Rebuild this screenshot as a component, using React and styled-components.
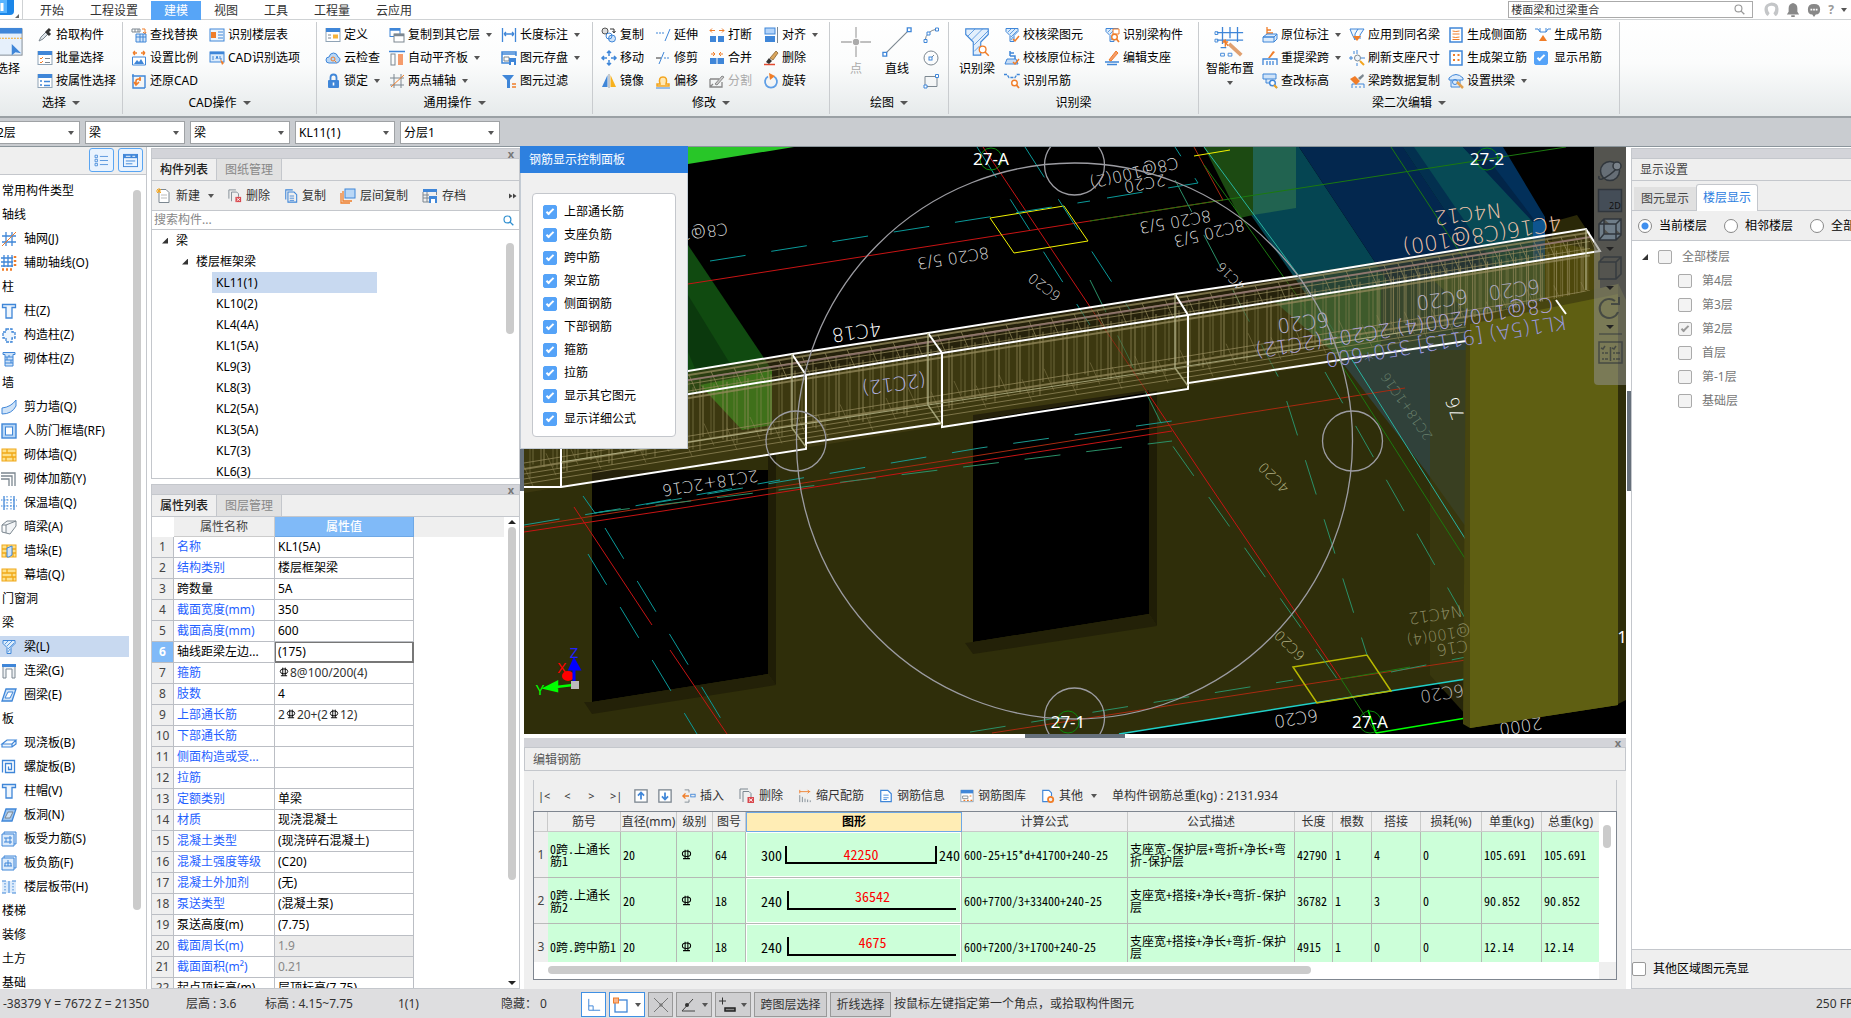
import React from "react";
import styled, { createGlobalStyle, css } from "styled-components";

const BLUE = "#3f86d8";
const ORANGE = "#f07d28";
const GRAY = "#7c8790";
const LINE = "#c4c7cc";
const UI = '"Noto Sans", "Noto Sans CJK SC", sans-serif';
const FIXED = '"Noto Sans Mono CJK SC", "Liberation Serif", "Noto Sans CJK SC", serif';

const Global = createGlobalStyle`
  *, *::before, *::after { box-sizing: border-box; }
  body { margin: 0; font: 12px/16px ${UI}; color: #000; overflow: hidden; }
  button, input, select { font: inherit; color: inherit; margin: 0; }
  button { background: none; border: 0; padding: 0; white-space: nowrap; cursor: default; }
`;

/* ---------- icons ---------- */
const page = <path d="M3 1.5h7l3 3v10H3z" fill="#fff" stroke={GRAY} />;
const hatchT = <><path d="M2 1.5h12v3l-4 4v6H6v-6l-4-4z" fill="#dcecfb" stroke={BLUE} /><path d="M4 5l3-3M6 7l5-5M7 10l6-6M7 13l2-3" stroke={BLUE} strokeWidth=".8" /></>;
const lens = (c = ORANGE) => <><circle cx="10.5" cy="10" r="2.8" fill="#fff" stroke={c} strokeWidth="1.4" /><path d="M12.5 12l2.5 3" stroke={c} strokeWidth="1.8" /></>;
const panelTop = <><rect x="1" y="1.5" width="14" height="13" fill="#fff" stroke="#8fa3b5" /><path d="M1 3h14" stroke={BLUE} strokeWidth="4" /></>;
const redX = <><rect x="8.5" y="9" width="6.5" height="6" fill="#d9484e" /><path d="M10 10.5l3.5 3M13.5 10.5l-3.5 3" stroke="#fff" /></>;
const bricks = <><rect x="1" y="2" width="14" height="12" fill="#fde08a" stroke="#f0a818" /><path d="M1 6h14M1 10h14M6 2v4M11 6v4M5 10v4M12 10v4" stroke="#f0a818" strokeWidth="1.3" /></>;
const icons = {
  dropper: <><path d="M2 14l2-4 5-5 2 2-5 5z" fill="#dfe5ea" stroke={GRAY} /><path d="M9 4l4 4M10 5l3-3" stroke="#333" strokeWidth="3" /></>,
  batch: <>{panelTop}<path d="M3 8l1 1 2-2M3 12l1 1 2-2" stroke={ORANGE} /><path d="M8 8.5h5M8 12.5h5" stroke={GRAY} /></>,
  attr: <>{panelTop}<path d="M3 8h2M3 12h2M7 8.5h6M7 12.5h6" stroke={BLUE} strokeWidth="1.5" /></>,
  replace: <><path d="M1 2h8v3H1zM4 2v3M7 2v3" stroke={GRAY} /><path d="M11 2h3v4M12 5l2 2 1-2" stroke={ORANGE} /><path d="M5 7h10v8H5z" fill="#d5e6f8" stroke={BLUE} /><path d="M5 10h10M9 7v8M12 7v8" stroke={BLUE} /></>,
  ratio: <><path d="M2 3h4M2 3l2-2M2 3l2 2M10 3h4M14 3l-2-2M14 3l-2 2" stroke={ORANGE} strokeWidth="1.3" /><path d="M1.500 7h13v8h-13z" fill="#fff" stroke={BLUE} /><path d="M3 14l3-4 2 2 2-3 3 5z" fill={BLUE} /></>,
  restore: <><path d="M2 1v14h12M1 3h13v12" stroke={BLUE} strokeWidth="1.4" /><path d="M5 11V8q0-2 3-2h2M3 9l2 3 3-3M9 4v4" stroke={ORANGE} strokeWidth="1.6" /></>,
  floorTab: <><rect x="1" y="2" width="14" height="12" fill="#eef5fc" stroke={BLUE} /><rect x="2" y="5" width="5" height="6" fill={ORANGE} /><path d="M9 5h5M9 8h5M9 11h5" stroke={BLUE} /></>,
  cadOpt: <><rect x="1" y="2" width="14" height="10" fill="#dcebfb" stroke={BLUE} /><path d="M1 3h14" stroke={BLUE} strokeWidth="2.5" /><path d="M3 7h2M3 9h2M7 9l1-3 1 3M11 6v3h2" stroke={BLUE} /><path d="M11 9l4 4-2 2z" fill={ORANGE} /></>,
  define: <>{panelTop}<path d="M3 8h3M3 11h3" stroke={GRAY} /><rect x="8" y="7.5" width="5" height="4" fill="#f7b33b" /></>,
  cloud: <><path d="M4 13q-3 0-3-3t3-3q1-4 4.500-4T13 7q2.500 1 2 3t-3 3z" fill="#b9d7f6" stroke={BLUE} /><circle cx="8" cy="9" r="2" stroke={ORANGE} /><path d="M9.500 10.500l2 2" stroke={ORANGE} /></>,
  lock: <><rect x="3" y="7" width="11" height="8" rx="1" fill={BLUE} /><path d="M5.500 7V4.500q0-3 3-3t3 3V7" stroke={BLUE} strokeWidth="1.8" /><path d="M8.500 9.500v3" stroke="#fff" strokeWidth="1.600" /></>,
  copyFloor: <><rect x="1" y="1.500" width="10" height="8" fill="#fff" stroke={BLUE} /><path d="M1 2.500h10" stroke={BLUE} strokeWidth="2.500" /><rect x="5" y="7" width="10" height="8" fill="#fff" stroke={GRAY} /><path d="M5 8h10" stroke={GRAY} strokeWidth="2.500" /></>,
  alignSlab: <><path d="M0 1.500h16" stroke={BLUE} strokeWidth="1.500" /><rect x="2" y="4" width="4" height="11" stroke={GRAY} /><rect x="9" y="4" width="5" height="11" fill="#f59c6c" /></>,
  twoPoint: <><path d="M5 1v14M12 1v14M1 5h14M1 12h14" stroke={GRAY} /><path d="M2 14L15 2" stroke={ORANGE} /></>,
  dim: <><path d="M1.500 1v14M14.500 1v14M3 7h10M3 7l2-2M3 7l2 2M13 7l-2-2M13 7l-2 2" stroke={BLUE} strokeWidth="1.300" /></>,
  save: <><path d="M8 13H1V2h14v4M1 4h14" stroke={BLUE} strokeWidth="1.500" /><path d="M3 7h5v4H3z" stroke={GRAY} /><rect x="8" y="8" width="7" height="7" fill={BLUE} /><rect x="10" y="12" width="3" height="3" fill="#fff" /></>,
  filter: <><path d="M1 2h12L9 7v8H6V7z" fill={BLUE} /><path d="M11 11h4M11 14h4" stroke={ORANGE} strokeWidth="1.300" /></>,
  copy2: <><circle cx="4" cy="4" r="3" fill="#ddd" stroke="#555" /><circle cx="11" cy="11.500" r="3.500" fill="#cfe3f8" stroke={BLUE} /><circle cx="8" cy="9" r="3" stroke={BLUE} /><path d="M9 2h4v3M11.500 4l1.500 2 1.500-2" stroke="#333" /></>,
  move: <><path d="M8 1v5M8 10v5M1 8h5M10 8h5M6 3l2-2 2 2M6 13l2 2 2-2M3 6L1 8l2 2M13 6l2 2-2 2" stroke={BLUE} strokeWidth="1.500" /></>,
  mirror: <><path d="M6.500 2v12H1z" fill={BLUE} /><path d="M9.500 2v12H15z" fill="#f7b11c" /><path d="M8 1v14" stroke={GRAY} strokeWidth=".8" /></>,
  extend: <><path d="M1 6h9" stroke={BLUE} strokeDasharray="2 1" /><path d="M10 14l5-12" stroke={BLUE} /></>,
  trim: <><path d="M1 8h5" stroke="#333" /><path d="M4 14l5-12" stroke={BLUE} /><path d="M9 8h6" stroke={BLUE} strokeDasharray="2 1" /></>,
  offset: <><path d="M2 13h12v-2H11q2-7-3-7T5 11H2z" fill="#ffe9b5" stroke="#f3a51f" strokeWidth="1.500" /><path d="M1 15h14" stroke={BLUE} /></>,
  breakI: <><rect x="1" y="9" width="6" height="6" fill={BLUE} /><rect x="9" y="9" width="6" height="6" fill={BLUE} /><path d="M1 3.500h5M1 3.500l2-2M1 3.500l2 2M10 3.500h5M15 3.500l-2-2M15 3.500l-2 2" stroke={ORANGE} /></>,
  merge: <><rect x="1" y="8" width="14" height="6" fill={BLUE} /><path d="M8 8v6" stroke="#fff" /><path d="M2 4h4M6 4L4 2M6 4L4 6M14 4h-4M10 4l2-2M10 4l2 2" stroke={ORANGE} /></>,
  split: <><path d="M1 6h9M1 6v8h12V9M1 14l3-3" stroke="#888" strokeWidth="1.300" /><path d="M6 11l7-8 2 1-7 8z" fill="#ccc" stroke="#888" /></>,
  align: <><rect x="2" y="1" width="10" height="6" fill="#b3d4fa" stroke={BLUE} /><rect x="2" y="9" width="10" height="6" fill={BLUE} /><path d="M14.500 0v16" stroke={GRAY} /></>,
  eraser: <><path d="M1 14.500h11" stroke="#e24a2f" strokeWidth="1.500" /><path d="M3 12l3-4 3 3-3 3z" fill="#333" /><path d="M7 8l6-7 2 2-5 7z" fill="#d9a55c" stroke="#7a5424" strokeWidth=".7" /></>,
  rotate: <><path d="M5 3.500a6 6 0 1 0 6 0" stroke="#5f9fe6" strokeWidth="1.800" /><path d="M6 0l6 3-5 4z" fill={ORANGE} /></>,
  arc: <><path d="M2 14Q3 4 14 2" stroke={GRAY} /><path d="M1 12.500h3v3H1zM12.500 1h3v3h-3zM4 5h3v3H4z" fill="#fff" stroke={BLUE} /></>,
  circ: <><circle cx="8" cy="8" r="7" stroke={GRAY} /><path d="M8 8l3-3" stroke={GRAY} /><rect x="6" y="7" width="3" height="3" fill="#fff" stroke={BLUE} /></>,
  rect: <><path d="M2 3.500h12v10H2z" stroke={GRAY} /><path d="M1 12h3v3H1zM12.500 1.500h3v3h-3z" fill="#fff" stroke={BLUE} /></>,
  checkBeam: <>{hatchT}<path d="M9 12l2 2 4-5" stroke={ORANGE} strokeWidth="1.500" /></>,
  checkNote: <><path d="M6 1v5M6 3h4M6 6h5v3" stroke={BLUE} strokeWidth="1.500" /><path d="M3 9h9l2 5H1z" fill="#c5dcf6" stroke={BLUE} /><path d="M9 12l2 2 4-5" stroke={ORANGE} strokeWidth="1.500" /></>,
  hook: <><path d="M0 1.500h3l2 3h6l2-3h3" stroke={BLUE} strokeWidth="1.300" strokeDasharray="3 1" />{lens()}</>,
  idBeam: <>{hatchT}<path d="M9 2h6v5H9z" fill="#fff" stroke={ORANGE} />{lens()}</>,
  editSup: <><path d="M1 12h14M3 14.500h10" stroke={BLUE} strokeWidth="1.500" /><path d="M5 10l7-9 2 2-7 8z" fill="#f59c6c" stroke={ORANGE} /></>,
  note: <><path d="M5 0v8M5 3h4M5 6h6" stroke={ORANGE} strokeWidth="1.300" /><path d="M1 10l4-3h10l-3 3zM1 10h11v5H1zM12 10l3-3v5l-3 3" fill="#dcebfb" stroke={BLUE} /></>,
  span: <><path d="M1 15V9h14v6M5 15v-4M8 15v-4M11 15v-4" stroke={BLUE} strokeWidth="1.300" /><path d="M6 8l5-7 2 1-5 6z" fill={ORANGE} /></>,
  level: <><path d="M1 1h13v5H1zM4 6v4h6" fill="#cfe3f8" stroke={BLUE} />{lens(BLUE)}<path d="M12 12l3 3" stroke="#f3a51f" strokeWidth="2" /></>,
  apply: <><path d="M1 2h8l-3 5v6L3 7zM9 2h6l-4 6v4" fill="#eef5fc" stroke={BLUE} /><path d="M4 9h8l-4 5z" fill={ORANGE} /></>,
  refresh: <><path d="M8 0v4M5 1v3M0 8h4M12 8h4M8 13v3M2 6v4" stroke={BLUE} /><circle cx="8.500" cy="8" r="3" stroke={GRAY} fill="#eef5fc" /><path d="M11 11l4 4" stroke="#f3a51f" strokeWidth="2" /></>,
  spanCopy: <><path d="M3 15v-4h12v4M7 15v-2M11 15v-2" stroke={BLUE} /><path d="M1 6l5-3 5 5-4 4z" fill={ORANGE} /><path d="M9 5l5-4 1 2-4 4z" fill={GRAY} /></>,
  sideBar: <><rect x="2" y="1" width="12" height="14" fill="#fff" stroke={BLUE} strokeWidth="1.500" /><path d="M4.500 4q3 1 7 0M4.500 7h7M4.500 10q3 1 7 0M4.500 12.500h7" stroke={ORANGE} /></>,
  frameBar: <><rect x="2" y="1" width="12" height="14" fill="#fff" stroke={BLUE} strokeWidth="1.500" /><path d="M5 5h2M9.500 5h2M5 10h2M9.500 10h2" stroke={ORANGE} strokeWidth="2" /></>,
  arch: <><path d="M1 5q7-7 14 0v2H1zM3 7v7h9V7" fill="#dcebfb" stroke={BLUE} /><circle cx="7" cy="9" r="2.500" stroke={BLUE} /><path d="M9 9l6 6" stroke="#e0a050" strokeWidth="2.500" /></>,
  genHook: <><path d="M0 2h3l2 3h6l2-3h3M5 1v4M11 1v4" stroke={BLUE} /><path d="M8 8l4 6H4z" fill={ORANGE} /></>,
  grid: <><path d="M5 1v14M11 1v14M1 5h14M1 11h14" stroke={BLUE} strokeWidth="1.300" /><path d="M1 15L15 1" stroke={ORANGE} /></>,
  auxGrid: <><path d="M3 0v12M7 0v12M11 0v12M0 3h12M0 7h12M0 11h12" stroke={BLUE} strokeWidth="1.300" /><path d="M14 1v12M1 14.500h12" stroke={ORANGE} strokeWidth="2.500" strokeDasharray="2 2" /></>,
  col: <path d="M1.500 1.500h13v3H11V15H5V4.500H1.500z" fill="#eef5fc" stroke={BLUE} strokeWidth="1.300" />,
  poly: <path d="M5 2h6v3h3v6h-3v4H5v-4H2V5h3z" fill="#eef5fc" stroke={BLUE} strokeWidth="1.300" strokeDasharray="3 1" />,
  brickCol: <><path d="M2 1.500h12v2H12V15H4V3.500H2z" fill="#cfe3f8" stroke={BLUE} /><path d="M4 6h8M4 9h8M4 12h8M8 4v2M6 6v3M10 9v3" stroke={BLUE} /></>,
  shear: <path d="M1 9Q10 8 15 1v6q-4 8-14 8z" fill="#cfe3f8" stroke={BLUE} />,
  door: <><rect x="1" y="1" width="14" height="14" fill="#b9d7f6" stroke={BLUE} strokeWidth="1.400" /><rect x="4.500" y="4" width="7" height="8" fill="#fff" stroke={BLUE} /></>,
  brick: bricks,
  corner: <path d="M0 2h14v13M0 5h11v10M0 8h8v7" stroke={GRAY} strokeWidth="1.300" />,
  dashes: <><path d="M3 1v14M13 1v14" stroke={BLUE} strokeWidth="1.300" /><path d="M6 1v14M10 1v14M0 5h16M0 11h16" stroke={BLUE} strokeDasharray="1.500 1.500" /></>,
  hidden: <path d="M1 6l5-4h9v5l-6 8-4-1V6zM1 6v7l4 1M5 6l10-4" fill="#f3f5f7" stroke={GRAY} />,
  pier: <>{bricks}<path d="M6 5l5-2v9l-3 2H6z" fill="#cfe3f8" stroke={BLUE} /></>,
  beam: hatchT,
  link: <><path d="M1 1h14v3H1z" fill={BLUE} /><path d="M2 4v11h3V6h6v9h3V4" stroke={GRAY} fill="#eef1f4" /></>,
  ring: <><path d="M5 2h10l-4 12H1z" fill="#cfe3f8" stroke={BLUE} strokeWidth="1.300" /><path d="M7 5h5l-3 6H4z" fill="#fff" stroke={BLUE} /></>,
  slab: <path d="M1 9l5-4h9l-4 4zM1 9v3h10l4-3V5M11 9v3" fill="#eef5fc" stroke={BLUE} strokeWidth="1.200" />,
  spiral: <path d="M1.500 13.500v-12h12v12H4.500v-9h6v6H7.500v-3" stroke={BLUE} strokeWidth="1.300" />,
  hole: <><path d="M5 2h10l-4 12H1z" fill="#9cc4f0" stroke={BLUE} strokeWidth="1.300" /><path d="M7 5h5l-3 6H4z" fill="#cfe3f8" stroke={GRAY} /></>,
  force: <><path d="M1 3h12v12H1zM3 3V1h12v12h-2" fill="#dcebfb" stroke={BLUE} /><path d="M3 7h8M3 11h8M5 7v4M9 5v8" stroke={BLUE} /></>,
  negBar: <><path d="M1 3h12v12H1zM3 3V1h12v12h-2" fill="#dcebfb" stroke={BLUE} /><path d="M4 11V8h6v3M7 5v6M3 11h8" stroke={BLUE} /></>,
  band: <><path d="M1 2h14v12H1z" fill="#dcebfb" /><path d="M1 2h4M1 14h4M8 2v12M11 2h4M11 14h4" stroke={BLUE} /><path d="M4 4v9M12 4v9" stroke={BLUE} strokeDasharray="1.500 1.500" /></>,
  newDoc: <>{page}<path d="M5 7h6M5 10h6" stroke="#bbb" /><path d="M0 3h5M3 0v5M1 1l4 4M5 1L1 5" stroke="#f3a51f" /></>,
  delDoc: <><path d="M1 11V1h8M4 14V3.500h6l2 2V9" fill="none" stroke={GRAY} />{redX}</>,
  copyDoc: <><path d="M2 12V1h8M4.500 3.500h7l3 3V15h-10z" stroke={BLUE} fill="none" strokeWidth="1.200" /><path d="M6.500 8h5M6.500 10.500h5M6.500 13h5" stroke={BLUE} /></>,
  layers: <><path d="M1 5v10h9M3 3v10h9" stroke={ORANGE} strokeWidth="1.300" /><rect x="5" y="1" width="10" height="9" fill="#b9d7f6" stroke={BLUE} /></>,
  archive: <><path d="M1 1h14v3H1z" fill={BLUE} /><path d="M1 4v10h6M1 7h6M1 10h6M5 4v10M14.500 4v3" stroke={GRAY} /><rect x="7" y="8" width="8" height="7" fill={BLUE} /><rect x="9" y="11" width="4" height="4" fill="#fff" /></>,
  more: <path d="M0 3l7 5-7 5zM8 3l7 5-7 5z" fill="#444" />,
  magnify: <><circle cx="6.500" cy="6.500" r="5" stroke="currentColor" strokeWidth="1.700" /><path d="M10 10l5 5" stroke="currentColor" strokeWidth="2" /></>,
  up: <><rect x="1" y="1" width="14" height="14" fill="#fff" stroke={GRAY} strokeWidth="1.500" /><path d="M8 12V4M4.500 7.500L8 4l3.500 3.500" stroke={BLUE} strokeWidth="2" /></>,
  down: <><rect x="1" y="1" width="14" height="14" fill="#fff" stroke={GRAY} strokeWidth="1.500" /><path d="M8 4v8M4.500 8.500L8 12l3.500-3.500" stroke={BLUE} strokeWidth="2" /></>,
  insert: <><path d="M3 1h5v3M3 15h5v-3" stroke={GRAY} /><path d="M8 8H1M4 5L1 8l3 3" stroke={ORANGE} strokeWidth="1.500" /><rect x="10" y="6" width="5" height="3" stroke={BLUE} /></>,
  scale: <><path d="M2 3h12M11 1l2 2-2 2M2 1v4" stroke={ORANGE} /><path d="M2 7v8M5 9v6M8 11v4M11 12v3M14 13v2" stroke={GRAY} /></>,
  info: <><path d="M2 1.500h8l4 4v9H2z" fill="#fff" stroke={BLUE} strokeWidth="1.400" /><path d="M5 7h6M5 10h6M5 12h4" stroke={BLUE} /></>,
  lib: <>{panelTop}<path d="M3 8h6v3H3z" stroke={GRAY} /><path d="M11 8h2M4 13h2M8 13h2M12 13h2" stroke={ORANGE} strokeWidth="1.300" /></>,
  other: <><path d="M8 14.500H2v-13h7l3 3V8" fill="#fff" stroke={BLUE} strokeWidth="1.300" /><circle cx="11" cy="12" r="3" stroke={ORANGE} strokeWidth="2" /></>,
  listView: <><path d="M6 3h10M6 8h10M6 13h10" stroke={BLUE} /><path d="M0 1.500h3v3H0zM0 6.500h3v3H0zM0 11.500h3v3H0z" stroke={BLUE} /></>,
  cardView: <><rect x="0.500" y="1.500" width="15" height="13" fill="#eaf4ff" stroke={BLUE} /><path d="M0 3.500h16" stroke={BLUE} strokeWidth="4" /><path d="M3 3.500h5M10 3.500h3" stroke="#fff" /><path d="M3 8.500h10M3 11.500h7" stroke={BLUE} /></>,
  ortho: <path d="M2 1v13h13M2 9h5v5" stroke={BLUE} strokeWidth="1.100" />,
  snap: <><rect x="2" y="3" width="12" height="12" stroke={BLUE} strokeWidth="1.300" /><rect x="0.500" y="1" width="5" height="5" fill="#f9b48a" stroke={ORANGE} /></>,
  cross: <path d="M1 1l14 14M15 1L1 15M6 8h4M8 6v4" stroke="#777" />,
  angle: <><path d="M13 2L2 14h13" stroke="#444" /><circle cx="7" cy="8" r="2" fill="#333" /></>,
  plus: <><path d="M0 4h7M3.500 0.500v7" stroke="#333" /><rect x="6" y="11" width="10" height="3" fill="#888" stroke="#222" strokeWidth="1.500" /></>,
  grade: <><ellipse cx="8" cy="7" rx="6" ry="4" stroke="#000" strokeWidth="1.500" /><path d="M6 1v13M10 1v13M3 14h10" stroke="#000" strokeWidth="1.500" /></>,
  pick: <><rect x="0" y="1" width="15.500" height="14" fill="#e6f0fb" stroke={GRAY} strokeWidth=".5" /><path d="M0 2h15.500" stroke={BLUE} strokeWidth="3" /><path d="M0 6h15.500" stroke="#f3a51f" strokeDasharray="1 .6" strokeWidth=".6" /><path d="M10 9v6l2-1.500 3 .5z" fill={BLUE} /></>,
  point: <><path d="M8 0v16M0 8h16" stroke="#aaa" strokeWidth=".7" /><circle cx="8" cy="8" r="2" fill="#aaa" stroke="#fff" strokeWidth=".6" /></>,
  line: <><path d="M1.500 14.500l13-13" stroke={GRAY} strokeWidth=".6" /><path d="M.5 13.500h2v2h-2zM13.500.5h2v2h-2z" fill="#fff" stroke={BLUE} strokeWidth=".7" /></>,
  bigBeam: <><path d="M2 1h12v3l-4 4v7H6V8L2 4z" fill="#e3effc" stroke={BLUE} strokeWidth=".6" /><path d="M3 5l4-4M5 7l6-6M6.500 9.500L14 2M6.500 13l3-3" stroke={BLUE} strokeWidth=".4" /><circle cx="11" cy="12" r="1.800" fill="#fff" stroke={ORANGE} strokeWidth=".7" /><path d="M12.300 13.300l2 2" stroke={ORANGE} strokeWidth=".8" /></>,
  smart: <><path d="M4 0v9M8 0v6M12 0v8M1 3h14M1 7h14M3 11h3" stroke={BLUE} strokeWidth=".7" /><path d="M0 2.500h1.500v1.500H0zM0 6.500h1.500V8H0zM3 14h2v1.500H3zM7 14h2v1.500H7z" stroke={BLUE} strokeWidth=".5" /><path d="M4 8h3M5.500 6.500v4M4.500 7l2.500 3" stroke={ORANGE} strokeWidth=".7" /><path d="M7.500 9l6.500 6" stroke="#e0a070" strokeWidth="2" /></>,
};
const Svg = styled.svg`display: block; flex: none; width: ${p => p.$s}px; height: ${p => p.$s}px; overflow: visible;`;
const Icon = ({ n, s = 16 }) => <Svg $s={s} viewBox="0 0 16 16" fill="none" aria-hidden="true">{icons[n]}</Svg>;

const Caret = styled.i`
  flex: none; width: 0; height: 0;
  border: ${p => p.$s || 3}px solid transparent; border-bottom: 0; border-top: 4px solid #555;
`;

/* ---------- shell ---------- */
const Shell = styled.div`display: flex; flex-direction: column; height: 100vh; background: #fff;`;

const TopBar = styled.header`display: flex; height: 20px; border-bottom: 1px solid #cfd2d4; background: #fff; flex: none;`;
const Logo = styled.div`
  width: 23px; border-right: 1px solid #cfd2d4; margin-right: 4px; background: #fff;
  svg { display: block; }
`;
const MenuTab = styled.button`
  padding: 0 13px; height: 19px; margin-top: 1px; color: #333;
  ${p => p.$on && css`background: #57a5f7; color: #fff;`}
`;
const TopRight = styled.div`margin-left: auto; display: flex; align-items: center; gap: 7px; padding-right: 4px; color: #999;`;
const TopSearch = styled.label`
  display: flex; align-items: center; width: 245px; height: 17px; border: 1px solid #aaa; padding: 0 7px 0 2px; margin-right: 4px;
  input { flex: 1; min-width: 0; border: 0; padding: 0; outline: 0; font-size: 11px; color: #333; height: 14px; }
`;

const Ribbon = styled.section`
  display: flex; flex: none; height: 98px; overflow: hidden; border-bottom: 2px solid #9aa0a4;
  background: linear-gradient(#fff, #fbfcfc 45%, #e6eaeb);
`;
const Group = styled.div`
  width: ${p => p.$w}px; flex: none; height: 92px; margin-top: 2px; border-right: 1px solid #c9cccf;
  display: flex; flex-direction: column; padding-left: ${p => p.$pad ?? 8}px;
`;
const Cols = styled.div`display: flex; gap: ${p => p.$gap || 11}px; height: 72px; padding-top: 1px;`;
const Col = styled.div`display: grid; grid-template-rows: repeat(3, 23px); align-content: start; justify-items: start;`;
const GroupLabel = styled.div`
  display: flex; align-items: center; justify-content: center; gap: 6px; height: 22px; margin-left: -${p => p.$pad ?? 8}px;
`;
const Tool = styled.button`
  display: flex; align-items: center; gap: 3px; height: 23px; color: ${p => (p.$off ? "#aaa" : "#000")};
  ${Caret} { margin-left: 3px; }
`;
const BigTool = styled.button`
  display: flex; flex-direction: column; align-items: center; gap: 4px; padding-top: 4px; height: 69px;
  color: ${p => (p.$off ? "#aaa" : "#000")}; margin-left: ${p => p.$pull || 0}px;
`;
const TickTool = styled.label`display: flex; align-items: center; gap: 6px; height: 23px; margin-left: -1px;`;

const Check = styled.input.attrs({ type: "checkbox" })`
  appearance: none; flex: none; width: 14px; height: 14px; border-radius: 2px; position: relative;
  border: 1px solid ${p => (p.$blue ? "#55a3f8" : "#999")}; background: ${p => (p.$blue ? "#55a3f8" : "#fff")};
  &:checked::after {
    content: ""; position: absolute; left: 4px; top: 1px; width: 4px; height: 8px;
    border: solid ${p => (p.$blue ? "#fff" : "#999")}; border-width: 0 2px 2px 0; transform: rotate(45deg);
  }
`;

const Filters = styled.div`
  display: flex; gap: 5px; flex: none; height: 29px; padding-top: 3px; background: #c9ccd0; border-bottom: 1px solid #8b959b;
`;
const Picker = styled.label`
  position: relative; display: block; width: 100px; height: 23px; flex: none;
  &:first-child { margin-left: -20px; }
  &:first-child select { padding-left: 16px; }
  select { appearance: none; width: 100%; height: 100%; border: 1px solid #9fa2a5; border-radius: 0; background: #fff; padding: 0 3px; }
  ${Caret} { position: absolute; right: 6px; top: 10px; }
`;

const Main = styled.main`flex: 1; min-height: 0; display: grid; grid-template-columns: 147px 373px 4px minmax(0, 1fr) 5px 220px;`;

/* ---------- component type list ---------- */
const Side = styled.nav`display: flex; flex-direction: column; min-height: 0; border-right: 1px solid ${LINE};`;
const SideHead = styled.div`
  display: flex; justify-content: flex-end; gap: 4px; height: 28px; flex: none; padding: 1px 3px 0; background: #efefef; border-bottom: 1px solid ${LINE};
  button { width: 25px; height: 24px; border: 1px solid #5aa5f2; border-radius: 3px; background: #e9f3fe; display: grid; place-items: center; }
`;
const SideBody = styled.div`flex: 1; min-height: 0; overflow: hidden; display: flex; justify-content: space-between; padding-top: 4px;`;
const SideList = styled.div`width: 129px; display: flex; flex-direction: column;`;
const SideTitle = styled.div`height: 24px; flex: none; line-height: 24px; padding-left: 2px;`;
const SideItem = styled.button`
  display: flex; align-items: center; gap: 7px; width: 100%; height: 21px; flex: none; margin: 1px 0 2px; padding-left: 1px; line-height: 21px;
  background: ${p => (p.$on ? "#c8d9f0" : "none")};
`;
const Thumb = styled.div`
  flex: none; border-radius: 4px; background: #cbcbcb;
  width: ${p => p.$w || 8}px; height: ${p => p.$h}px; margin: ${p => p.$m || 0};
`;

/* ---------- docks ---------- */
const Dock = styled.section`display: flex; flex-direction: column; min-height: 0; border: 1px solid ${LINE}; background: #fff; overflow: hidden;`;
const Strip = styled.div`
  height: 10px; flex: none; background: #d3d4d9; border-bottom: 1px solid ${LINE}; display: flex; justify-content: flex-end; padding-right: 5px;
  button { font-size: 11px; line-height: 8px; color: #777; font-weight: 700; }
`;
const Stack = styled.div`display: grid; grid-template-rows: 331px minmax(0, 1fr); gap: 5px; padding: 1px 0 0 4px; min-height: 0;`;
const Tabs = styled.div`display: flex; height: 22px; flex: none; background: #efefef; border-bottom: 1px solid ${LINE};`;
const Tab = styled.button`
  width: 65px; border-right: 1px solid ${LINE};
  ${p => (p.$on ? css`font-weight: 500; color: #222;` : css`background: #e1e1e1; color: #888;`)}
`;
const ListTools = styled.div`
  display: flex; align-items: center; height: 30px; flex: none; background: #efefef; border-bottom: 1px solid ${LINE}; padding: 0 2px 0 4px; gap: 14px; color: #333;
`;
const ListTool = styled.button`display: flex; align-items: center; gap: 4px; ${Caret} { margin-left: 4px; }`;
const More = styled.button`margin-left: auto;`;
const ListSearch = styled.label`
  display: flex; align-items: center; height: 19px; flex: none; border-bottom: 1px solid ${LINE}; padding: 0 5px 0 2px; color: #2f8fd0;
  input { flex: 1; border: 0; padding: 0; outline: 0; height: 16px; color: #000; }
  input::placeholder { color: #888; }
`;
const TreeBody = styled.div`flex: 1; min-height: 0; overflow: hidden; display: flex; justify-content: space-between;`;
const Tree = styled.ul`list-style: none; margin: 0; padding: 0; width: 225px;`;
const Node = styled.li`
  display: flex; align-items: center; gap: 8px; height: 21px; margin-left: ${p => p.$x}px; padding-left: ${p => p.$p || 0}px;
  background: ${p => (p.$on ? "#c8d9f0" : "none")};
`;
const Twisty = styled.i`flex: none; width: 6px; height: 6px; background: #333; clip-path: polygon(100% 0, 100% 100%, 0 100%);`;

const PropBody = styled.div`flex: 1; min-height: 0; overflow: hidden; display: flex; background: #fff;`;
const PropSheet = styled.div`flex: 1; background: linear-gradient(#efefef 20px, #fff 20px);`;
const PropTable = styled.table`
  width: 262px; table-layout: fixed; border-collapse: separate; border-spacing: 0;
  th, td { height: 21px; padding: 0 3px; border-right: 1px solid #bbbec4; border-bottom: 1px solid #bbbec4; font-weight: 400; line-height: 16px; white-space: nowrap; overflow: hidden; text-align: left; }
  thead th { height: 20px; text-align: center; background: #efefef; color: #444; border-color: #ccc; }
  thead th:first-child { background: #fff; border: 0; }
  thead th:last-child { background: #80baf8; color: #fff; font-weight: 500; border-color: #6ea8e6; }
`;
const RowNo = styled.th`&& { text-align: center; background: ${p => (p.$on ? "#80baf8" : "#efefef")}; color: ${p => (p.$on ? "#fff" : "#444")}; font-weight: ${p => (p.$on ? 700 : 400)}; padding: 0; }`;
const PropName = styled.td`color: ${p => (p.$k ? "#000" : "#1f5fff")};`;
const PropVal = styled.td`
  ${p => p.$dim && css`background: #ebebeb; color: #888;`}
  ${p => p.$on && css`&& { box-shadow: inset 0 0 0 1px #777; border-color: #777; }`}
`;
const Rebar = styled.span`display: inline-flex; align-items: center; height: 16px; color: #333; svg { margin: 0 1px 3px; }`;
const ScrollCol = styled.div`width: 15px; display: flex; flex-direction: column; align-items: center; padding: 3px 0 3px; gap: 3px;`;
const Tri = styled.i`width: 0; height: 0; border: 4px solid transparent; ${p => (p.$up ? "border-top: 0; border-bottom: 4px solid #222;" : "border-bottom: 0; border-top: 4px solid #222; margin-top: auto;")}`;

/* ---------- centre ---------- */
const Splitter = styled.div`
  display: grid; place-items: center; background: #fff;
  i { background: #66707b; width: ${p => (p.$row ? "100px" : "4px")}; height: ${p => (p.$row ? "4px" : "100px")}; }
`;
const VSplit = styled(Splitter)`align-items: start; padding-top: 244px;`;
const Centre = styled.div`display: grid; grid-template-rows: minmax(0, 1fr) 4px 251px; min-height: 0; min-width: 0;`;
const View = styled.div`
  position: relative; background: #000; min-height: 0;
  > svg { display: block; width: 100%; height: 100%; }
`;
const Float = styled.section`
  position: absolute; left: -4px; top: -1px; width: 168px; height: 303px; background: #f0f0f0; border: 1px solid #c3cbd4; border-top: 0; z-index: 2;
  h2 { margin: 0 -1px; height: 27px; font: inherit; line-height: 27px; padding-left: 9px; background: #2d80df; color: #fff; }
`;
const FloatList = styled.div`
  margin: 20px 11px 0; height: 244px; background: #fff; border: 1px solid ${LINE}; border-radius: 4px; padding: 6px 10px;
  label { display: flex; align-items: center; gap: 7px; height: 23px; }
`;

const Editor = styled.section`background: #efefef; display: flex; flex-direction: column; min-width: 0; min-height: 0;`;
const EditorTitle = styled.h2`
  margin: 0; height: 23px; flex: none; font: inherit; line-height: 23px; padding-left: 8px; color: #555; border: 1px solid ${LINE}; border-top: 0;
`;
const EditorTools = styled.div`
  display: flex; align-items: center; height: 31px; flex: none; margin: 9px 9px 0; padding-left: 4px; border: solid ${LINE}; border-width: 0 1px; color: #333;
  > * { margin-right: 15px; }
`;
const Step = styled.button`width: 11px; font-size: 11px; && { margin-right: 13px; }`;
const RowMove = styled(ListTool)`&& { margin-right: 10px; }`;
const Sheet = styled.div`
  flex: 1; min-height: 0; margin: 0 9px 9px; border: 1px solid #7f8690; background: #fff; display: grid;
  grid-template: minmax(0, 1fr) 17px / minmax(0, 1fr) 17px;
`;
const SheetClip = styled.div`overflow: hidden;`;
const Bars = styled.table`
  width: 1066px; table-layout: fixed; border-collapse: separate; border-spacing: 0; font: 12px/12px ${FIXED};
  th { font: 12px/16px ${UI}; }
  thead th { height: 20px; padding: 0; text-align: center; background: #efefef; color: #333; border-right: 1px solid #c9c9c9; border-bottom: 1px solid #c9c9c9; white-space: nowrap; }
  tbody th { background: #efefef; padding: 0; color: #444; border-bottom: 1px solid #bbb; }
  td { height: 46px; padding: 0 2px; background: #ccffd9; border-right: 1px solid #b5b9b5; border-bottom: 1px solid #b5b9b5; }
`;
const ShapeHead = styled.th`&&& { background: #ffedb5; border: 1px solid #6ea8e6; font-weight: 600; color: #000; }`;
const ShapeCell = styled.td`&& { box-shadow: inset 0 0 0 1px #fff; padding: 0; }`;
const Shape = styled.div`
  display: grid; grid-template-columns: 22px 1fr ${p => (p.$both ? "22px" : "1px")}; gap: ${p => (p.$both ? 2 : 4)}px; align-items: center; padding-left: 15px; font-size: 14px; line-height: 14px;
`;
const Bend = styled.span`
  height: ${p => (p.$both ? 18 : 19)}px; border: 2px solid #000; border-top: 0; ${p => !p.$both && "border-right: 0;"}
  color: #f00; text-align: center; display: block; line-height: ${p => (p.$both ? 16 : 10)}px;
`;
const GradeBox = styled.span`display: grid; place-items: center start; padding-left: 2px;`;
const Corner = styled.div`background: #efefef;`;

/* ---------- display settings ---------- */
const Settings = styled(Dock)`margin-top: 1px; border-right: 0;`;
const SetTitle = styled.h2`margin: 0; font: inherit; line-height: 21px; height: 22px; flex: none; padding-left: 8px; color: #444; background: #efefef; border-bottom: 1px solid ${LINE};`;
const SetTabs = styled.div`display: flex; align-items: flex-end; height: 30px; flex: none; padding-left: 2px; background: #efefef; border-bottom: 1px solid ${LINE};`;
const SetTab = styled.button`
  width: 62px; height: 23px; background: #e0e0e0; color: #444;
  ${p => p.$on && css`height: 27px; margin-bottom: -1px; background: #fff; color: #2d80df; border: 1px solid ${LINE}; border-bottom: 0; border-radius: 3px 3px 0 0;`}
`;
const Radios = styled.div`
  display: flex; gap: 17px; align-items: center; height: 30px; flex: none; padding-left: 6px; background: #efefef; border-bottom: 1px solid ${LINE}; overflow: hidden;
  label { display: flex; align-items: center; gap: 7px; flex: none; }
`;
const Radio = styled.input.attrs({ type: "radio" })`
  appearance: none; width: 14px; height: 14px; border: 1px solid #888; border-radius: 50%; background: #fff;
  &:checked { background: radial-gradient(#3f8fee 3px, #fff 4px); }
`;
const Floors = styled.div`
  flex: 1; padding-top: 4px; color: #777;
  label { display: flex; align-items: center; gap: 10px; height: 24px; margin-left: 46px; }
`;
const FloorRoot = styled.div`display: flex; align-items: center; gap: 10px; padding-left: 10px; && label { margin: 0; }`;
const FloorCheck = styled(Check)`background: #f3f3f3; border-color: #aaa;`;
const SetFoot = styled.div`
  height: 39px; flex: none; background: #efefef; border-top: 1px solid ${LINE}; display: flex; align-items: center;
  label { display: flex; align-items: center; gap: 7px; }
`;

/* ---------- status ---------- */
const Status = styled.footer`display: flex; align-items: center; height: 29px; flex: none; background: #dedee0; color: #333; gap: 3px; overflow: hidden; white-space: nowrap; padding-left: 3px;`;
const Readout = styled.span`width: ${p => p.$w}px; flex: none;`;
const StatusBtn = styled.button`
  display: flex; align-items: center; justify-content: center; gap: 6px; width: ${p => p.$w}px; height: 25px; flex: none; margin-top: 2px;
  border: 1px solid ${p => (p.$on ? "#3f90e4" : "#999")}; background: ${p => (p.$on ? "#fff" : "#cfcfd1")};
`;
const Fps = styled.span`margin-left: auto; width: 35px; overflow: hidden;`;

/* ---------- data ---------- */
const menu = ["开始", "工程设置", "建模", "视图", "工具", "工程量", "云应用"];
const ribbon = [
  { label: "选择", w: 123, pad: 0, gap: 14, big: [["pick", "选择", -7]], cols: [[["dropper", "拾取构件"], ["batch", "批量选择"], ["attr", "按属性选择"]]] },
  { label: "CAD操作", w: 194, cols: [[["replace", "查找替换"], ["ratio", "设置比例"], ["restore", "还原CAD"]], [["floorTab", "识别楼层表"], ["cadOpt", "CAD识别选项"]]] },
  { label: "通用操作", w: 276, gap: 9, cols: [[["define", "定义"], ["cloud", "云检查"], ["lock", "锁定", 1]], [["copyFloor", "复制到其它层", 1], ["alignSlab", "自动平齐板", 1], ["twoPoint", "两点辅轴", 1]], [["dim", "长度标注", 1], ["save", "图元存盘", 1], ["filter", "图元过滤"]]] },
  { label: "修改", w: 237, cols: [[["copy2", "复制"], ["move", "移动"], ["mirror", "镜像"]], [["extend", "延伸"], ["trim", "修剪"], ["offset", "偏移"]], [["breakI", "打断"], ["merge", "合并"], ["split", "分割", 0, 1]], [["align", "对齐", 1], ["eraser", "删除"], ["rotate", "旋转"]]] },
  { label: "绘图", w: 119, pad: 11, big: [["point", "点", 0, 1], ["line", "直线"]], cols: [[["arc"], ["circ"], ["rect"]]] },
  { label: "识别梁", w: 250, plain: 1, pad: 10, gap: 9, big: [["bigBeam", "识别梁"]], cols: [[["checkBeam", "校核梁图元"], ["checkNote", "校核原位标注"], ["hook", "识别吊筋"]], [["idBeam", "识别梁构件"], ["editSup", "编辑支座"]]] },
  { label: "梁二次编辑", w: 421, pad: 7, gap: 8, big: [["smart", "智能布置", 0, 0, 1]], cols: [[["note", "原位标注", 1], ["span", "重提梁跨", 1], ["level", "查改标高"]], [["apply", "应用到同名梁"], ["refresh", "刷新支座尺寸"], ["spanCopy", "梁跨数据复制"]], [["sideBar", "生成侧面筋"], ["frameBar", "生成架立筋"], ["arch", "设置拱梁", 1]], [["genHook", "生成吊筋"], ["tick", "显示吊筋"]]] },
];
const types = [
  ["常用构件类型"], ["轴线"], ["轴网(J)", "grid"], ["辅助轴线(O)", "auxGrid"], ["柱"], ["柱(Z)", "col"], ["构造柱(Z)", "poly"], ["砌体柱(Z)", "brickCol"],
  ["墙"], ["剪力墙(Q)", "shear"], ["人防门框墙(RF)", "door"], ["砌体墙(Q)", "brick"], ["砌体加筋(Y)", "corner"], ["保温墙(Q)", "dashes"], ["暗梁(A)", "hidden"], ["墙垛(E)", "pier"], ["幕墙(Q)", "brick"],
  ["门窗洞"], ["梁"], ["梁(L)", "beam"], ["连梁(G)", "link"], ["圈梁(E)", "ring"], ["板"], ["现浇板(B)", "slab"], ["螺旋板(B)", "spiral"], ["柱帽(V)", "col"], ["板洞(N)", "hole"],
  ["板受力筋(S)", "force"], ["板负筋(F)", "negBar"], ["楼层板带(H)", "band"], ["楼梯"], ["装修"], ["土方"], ["基础"],
];
const beams = ["KL11(1)", "KL10(2)", "KL4(4A)", "KL1(5A)", "KL9(3)", "KL8(3)", "KL2(5A)", "KL3(5A)", "KL7(3)", "KL6(3)"];
const G = <Icon n="grade" s={10} />;
const props = [
  ["名称", "KL1(5A)"], ["结构类别", "楼层框架梁"], ["跨数量", "5A", 1], ["截面宽度(mm)", "350"], ["截面高度(mm)", "600"], ["轴线距梁左边...", "(175)", 1],
  ["箍筋", <Rebar>{G}8@100/200(4)</Rebar>], ["肢数", "4"], ["上部通长筋", <Rebar>2{G}20+(2{G}12)</Rebar>], ["下部通长筋", ""], ["侧面构造或受...", ""], ["拉筋", ""],
  ["定额类别", "单梁"], ["材质", "现浇混凝土"], ["混凝土类型", "(现浇碎石混凝土)"], ["混凝土强度等级", "(C20)"], ["混凝土外加剂", "(无)"], ["泵送类型", "(混凝土泵)"],
  ["泵送高度(m)", "(7.75)", 1], ["截面周长(m)", "1.9", 0, 1], ["截面面积(m²)", "0.21", 0, 1], ["起点顶标高(m)", "层顶标高(7.75)", 1],
];
const shows = ["上部通长筋", "支座负筋", "跨中筋", "架立筋", "侧面钢筋", "下部钢筋", "箍筋", "拉筋", "显示其它图元", "显示详细公式"];
const barCols = [["", 14], ["筋号", 73], ["直径(mm)", 56], ["级别", 36], ["图号", 33], ["图形", 216], ["计算公式", 166], ["公式描述", 167], ["长度", 38], ["根数", 39], ["搭接", 49], ["损耗(%)", 61], ["单重(kg)", 60], ["总重(kg)", 58]];
const bars = [
  ["0跨.上通长筋1", "20", "64", "300", "42250", "240", "600-25+15*d+41700+240-25", "支座宽-保护层+弯折+净长+弯折-保护层", "42790", "1", "4", "0", "105.691", "105.691"],
  ["0跨.上通长筋2", "20", "18", "240", "36542", "", "600+7700/3+33400+240-25", "支座宽+搭接+净长+弯折-保护层", "36782", "1", "3", "0", "90.852", "90.852"],
  ["0跨.跨中筋1", "20", "18", "240", "4675", "", "600+7200/3+1700+240-25", "支座宽+搭接+净长+弯折-保护层", "4915", "1", "0", "0", "12.14", "12.14"],
];

/* ---------- 3D scene ---------- */
const interp = pts => x => {
  for (let i = 1; i < pts.length; i++) {
    if (x <= pts[i][0]) {
      const [a, b] = [pts[i - 1], pts[i]];
      return a[1] + ((b[1] - a[1]) * (x - a[0])) / (b[0] - a[0]);
    }
  }
  return pts[pts.length - 1][1];
};
const frontTop = interp([[524, 421], [688, 394], [942, 353], [1188, 315], [1600, 251]]);
const backTop = interp([[524, 398], [792, 354], [1175, 294], [1586, 229], [1600, 227]]);
const frontBottom = interp([[524, 493], [806, 447], [942, 425], [1188, 386], [1466, 341], [1600, 319]]);
const stirrups = [];
for (let x = 530, i = 0; x < 1588; i++) {
  stirrups.push({ x, a: backTop(x) + 10 + ((i * 7) % 14), b: frontBottom(x) - 14 - ((i * 13) % 15), o: 0.45 + ((i * 5) % 4) / 8, tie: i % 4 === 0 });
  x += [3, 8, 3, 9, 4, 7][i % 6] * (x > 1370 ? 0.6 : 1);
}
const runs = [4, 9, 13, 20, 27].map(d => [d, backTop]).concat([[-9, frontBottom], [-14, frontBottom], [-19, frontBottom], [-24, frontBottom], [-30, frontBottom]]);

const Notes = [
  // text, x, y, angle, size, colour
  ["8C20 5/3", 988, 247, 171, 16, "#ddd"], ["4C18", 880, 322, 172, 19, "#fff"], ["(2C12)", 925, 373, 172, 19, "#b8b8ea"],
  ["C8@100(2)", 727, 223, 172, 16, "#ddd"], ["2C18+2C16", 757, 470, 171, 16, "#ddd"],
  ["C8@100(2)", 1177, 157, 167, 16, "#ddd"], ["2C20", 1164, 174, 169, 16, "#ddd"], ["8C20 5/3", 1210, 210, 170, 16, "#ddd"], ["8C20 5/3", 1243, 219, 166, 16, "#ddd"],
  ["N4C12", 1500, 203, 173, 20, "#f2c6ac"], ["4C16(C8@100)", 1560, 215, 171, 21, "#f2c6ac"],
  ["6C20", 1539, 279, 172, 20, "#a9a6b8"], ["6C20", 1467, 289, 172, 20, "#b6b2c4"], ["C8@100/200(4) 2C20+(2C12)", 1552, 297, 171, 20, "#b0a4dc"],
  ["KL1(5A) [9113] 350*600", 1566, 315, 171, 20, "#9a9ae2"], ["6C20", 1328, 312, 172, 20, "#b3aecd"],
  ["6C20", 1062, 294, 217, 14, "#ddd"], ["4C16", 1246, 285, 225, 13, "#ddd"], ["4C20", 1290, 487, 225, 14, "#b5b587"], ["6C20", 1306, 655, 225, 14, "#b5b587"],
  ["2C18+1C16", 1433, 436, 235, 13, "#6d8570"], ["76", 1465, 417, 250, 18, "#fff"],
  ["N4C12", 1461, 605, 171, 16, "#8f8f68"], ["@100(4)", 1470, 625, 171, 15, "#8f8f68"], ["C16", 1467, 640, 171, 16, "#8f8f68"],
  ["6C20", 1317, 709, 171, 17, "#ddd"], ["6C20", 1463, 684, 171, 17, "#bbb"], ["2000", 1541, 717, 171, 17, "#ddd"],
];
const Dash = ({ d, c = "#0a9a9a", o = 1 }) => <path d={d} stroke={c} strokeDasharray="36 26" opacity={o} />;

const Scene = () => (
  <svg viewBox="524 147 1102 587" preserveAspectRatio="xMidYMid slice" fill="none" role="img" aria-label="三维模型">
    <path d="M524 147H794L688 164H524z" fill="#28c628" />
    <path d="M688 245L772 370V395L688 408z" fill="#104a10" />
    <path d="M688 295L737 375L700 380L688 352z" fill="#0b390d" />
    <path d="M1204 147H1299L1400 300H1310z" fill="#054552" />
    <path d="M1204 147H1253V215L1240 218z" fill="#1c4a12" />
    <path d="M1299 147H1403L1505 300H1400z" fill="#03274e" />
    <path d="M1403 147H1463L1533 220L1545 290L1505 300z" fill="#074a55" />
    <path d="M1403 147H1414L1516 296L1505 300z" fill="#03304f" />
    <path d="M1463 147H1503L1545 217V285L1533 288V222z" fill="#02305a" />
    <path d="M1463 147H1479L1536 222H1533z" fill="#022548" />
    <path d="M1533 222L1545 219V285H1533z" fill="#0e5590" />
    <path d="M1253 147H1296V208L1253 215z" fill="#216350" />
    <path d="M1552 222L1577 215L1600 250V300H1552z" fill="#2a2808" />

    <path d="M524 421L1188 315L1600 251V320L1626 300V680L1466 679L1119 734H524z" fill="#2f2e0a" />
    <path d="M592 470H768V674L592 702z" fill="#000" />
    <path d="M768 455L776 453V685L768 674z" fill="#1f1d06" />
    <path d="M584 702L592 702L768 674L776 685L592 714z" fill="#232108" />
    <path d="M973 415L1149 390V614L973 642z" fill="#000" />
    <path d="M1149 392L1157 391V626L1149 614z" fill="#1f1d06" />
    <path d="M965 643L973 642L1149 614L1157 626L973 654z" fill="#232108" />
    <path d="M1338 357L1466 340V527L1425 470z" fill="#30413a" />
    <path d="M1430 350H1466V715L1430 675z" fill="#3f3d10" opacity=".6" />

    <g strokeWidth="1">
      <path d="M688 284L1020 232L1223 200M983 147L1206 480L1341 679M524 532L663 511L909 472L1172 431M574 507L652 625M670 650L727 734" stroke="#c81414" />
      <path d="M524 527L962 458L1405 388M1194 147L1223 200M992 733L1341 679L1466 660" stroke="#a82a10" />
      <path d="M1090 221L1223 200L1566 147M1204 165L1300 300L1466 560M1391 147L1463 257M1341 679L1376 733M1341 679L1410 667" stroke="#1c7a10" />
      <path d="M1204 147L1299 276L1466 540" stroke="#28b5a0" />
      <path d="M1119 734L1466 679" stroke="#20d0c8" strokeWidth="1.500" />
      <path d="M1376 733L1466 718M1368 710L1376 733" stroke="#0f0" strokeWidth="1.500" />
      <path d="M990 218L1064 206L1088 241L1014 253zM1194 156L1230 150" stroke="#f2f200" />
      <path d="M1293 667L1367 655L1391 691L1317 703z" stroke="#b8b800" strokeWidth="1.500" />
      <Dash d="M710 261L1090 201" /><Dash d="M977 147L1090 325" /><Dash d="M1025 147L1085 241L1130 310" />
      <Dash d="M1107 198L1198 183L1175 147" /><Dash d="M1090 280L1172 445L1345 690" c="#2a9068" /><Dash d="M1175 180L1280 380L1367 655" c="#2a9068" />
      <Dash d="M1325 372L1466 620" c="#2a9068" />
      <Dash d="M524 525L980 448L1172 421" c="#1b9a90" /><Dash d="M594 513L1172 441" c="#2a9068" /><Dash d="M583 496L595 513L780 480" />
      <Dash d="M588 554L720 772" /><Dash d="M605 528L740 750" /><Dash d="M970 732L1293 680M1391 672L1466 657" c="#2a9068" />
    </g>

    <path d="M524 398L792 354L1175 294L1586 229L1600 251V319L1466 341L1188 386L524 493z" fill="#4a4216" opacity=".5" />
    <path d="M700 385L772 370V425L742 430z" fill="#3f7a1c" opacity=".85" />
    <path d="M1275 302L1381 285V352L1340 358z" fill="#3f6a38" opacity=".7" />
    <path d="M1381 285L1545 262V300L1466 318V341L1381 354z" fill="#355040" opacity=".6" />
    <path d="M1430 277L1545 259V300L1470 315z" fill="#5f6a20" opacity=".4" />
    <path d="M1545 240L1600 251V300L1545 306z" fill="#55500c" opacity=".7" />
    <g stroke="#948a5c">
      {stirrups.map(s => <path key={s.x} d={`M${s.x} ${s.a}V${s.b}${s.tie ? "m-7 -14l10 22" : ""}`} opacity={s.o} />)}
      {stirrups.filter(s => s.tie).map(s => <path key={s.x} d={`M${s.x} ${backTop(s.x) + 4}l8 18`} opacity=".7" />)}
      {runs.map(([d, f], i) => <path key={i} d={`M524 ${f(524) + d}L806 ${f(806) + d}L942 ${f(942) + d}L1188 ${f(1188) + d}L1590 ${f(1590) + d}`} strokeWidth={i % 4 ? 1 : 2} opacity=".75" />)}
    </g>
    <path d="M524 406L1190 301L1590 237" stroke="#9a7c78" strokeWidth="2" opacity=".8" />

    <path d="M1470 319L1618 290V705L1470 728z" fill="#5f5f12" />
    <path d="M1466 319L1618 284V294L1470 324z" fill="#474510" />
    <path d="M1466 319L1470 322V728L1463 724z" fill="#47450f" />
    <path d="M1618 283L1626 300V700L1618 704z" fill="#2f2e0a" />

    <g stroke="#fff" strokeWidth="2">
      <path d="M524 398L792 354L928 333L1175 294L1298 276L1586 229L1600 251L1188 315L942 353L806 375L524 421" />
      <path d="M524 487H530L561 487L806 449L806 443L942 423V427L1188 389V383L1466 341" />
      <path d="M561 425V487M806 375V449M942 353V427M1188 315V389M792 354L806 375M928 333L942 353M1175 294L1188 315M1556 300L1566 314" />
    </g>
    <g stroke="#b9b98e" opacity=".8">
      <path d="M792 354V428L806 447M928 333V405L942 425M1175 294V368L1188 386M1586 229V290" strokeWidth="1.500" />
      <path d="M561 462L792 426L928 405L1175 368L1430 328" />
    </g>

    <g fontFamily='"DejaVu Sans", sans-serif' fontWeight="200">
      {Notes.map(([t, x, y, a, s, c], i) => <text key={i} x={x} y={y} transform={`rotate(${a} ${x} ${y})`} fontSize={s} fill={c}>{t}</text>)}
    </g>
    <path d="M1470 640H1618V705L1470 728z" fill="#5f5f12" />
    <g stroke="#9c9ca2" strokeWidth="1.300">
      <circle cx="1074.500" cy="441" r="278" />
      <circle cx="1074.500" cy="165" r="30" /><circle cx="1074.500" cy="718" r="30" /><circle cx="796" cy="441" r="30" /><circle cx="1352.500" cy="441" r="30" />
    </g>
    <g stroke="#0a8a0a">
      <circle cx="991" cy="159" r="11" /><circle cx="1487" cy="159" r="11" /><circle cx="1068" cy="722" r="11" /><circle cx="1370" cy="722" r="11" />
    </g>
    <g fill="#fff" fontFamily='"Noto Sans", sans-serif' fontSize="17" textAnchor="middle">
      <text x="991" y="165">27-A</text><text x="1487" y="165">27-2</text><text x="1068" y="728">27-1</text><text x="1370" y="728">27-A</text><text x="1622" y="643">1</text>
    </g>

    <ellipse cx="568" cy="676" rx="6" ry="5" fill="#f00" />
    <path d="M574 684V660M570 669l4-9 5 9z" stroke="#00f" strokeWidth="3" fill="#00f" />
    <path d="M573 685L556 687M545 688l12-6v9z" stroke="#0f0" strokeWidth="2.500" fill="#0f0" />
    <rect x="571" y="681" width="8" height="8" fill="#bbb" />
    <g fontFamily='"Noto Sans", sans-serif' fontSize="15" textAnchor="middle">
      <text x="574" y="658" fill="#22f">Z</text><text x="562" y="673" fill="#f00">X</text><text x="540" y="695" fill="#0f0">Y</text>
    </g>

    <path d="M1594 147h32v238h-28q-4 0-4-4z" fill="#8c8c84" opacity=".6" />
    <g stroke="#30363c" strokeWidth="1.500">
      <circle cx="1610" cy="171" r="9.500" fill="#666e76" /><path d="M1599 176q-1 4 3 3q8-3 15-11" /><circle cx="1617" cy="166" r="4" fill="#7a828a" />
      <rect x="1598.500" y="189.500" width="23" height="22" fill="#444d57" />
      <path d="M1599 224l5-5h17v16l-5 5h-17zM1599 224h17v16M1616 224l5-5M1604 219v15h17M1604 234l-5 6" fill="#6f7d88" />
      <path d="M1599 262l5-5h17v17l-5 5h-17zM1599 262h17v17M1616 262l5-5" opacity=".8" />
      <path d="M1615 301a9.500 9.500 0 1 0 3 11M1619 297v7h-8" strokeWidth="2" opacity=".7" />
      <path d="M1599 334h23" opacity=".6" />
      <path d="M1599 342h23v21h-23zM1610.500 347v14M1601 348l2 1 2-3M1612 348l2 1 2-3M1602 353h2M1605 353h3M1613 353h2M1616 353h4M1602 359h2M1605 359h3M1613 359h2M1616 359h4" opacity=".7" />
    </g>
    <path d="M1606 247h8l-4 4zM1606 286h8l-4 4zM1606 325h8l-4 4z" fill="#222" />
    <text x="1609" y="209" fontSize="9" fill="#111" fontFamily='"Noto Sans", sans-serif'>2D</text>
  </svg>
);

const RibbonItem = ({ item: [n, t, arrow, off] }) =>
  n === "tick" ? <TickTool><Check $blue defaultChecked />{t}</TickTool>
    : <Tool $off={off} aria-label={t || n}><Icon n={n} />{t}{arrow ? <Caret /> : null}</Tool>;

const Close = () => <button aria-label="关闭">x</button>;

export default function App() {
  return (
    <Shell>
      <Global />
      <TopBar>
        <Logo><svg width="20" height="19" aria-hidden="true"><path d="M0 0H14V11q0 4-4 4H0z" fill="#1b86e8" /><path d="M0 0h7v13H0z" fill="#58b4ff" /><path d="M2 3v8" stroke="#fff" strokeWidth="3" /><path d="M19 14v4h-4z" fill="#666" /></svg></Logo>
        {menu.map(m => <MenuTab key={m} $on={m === "建模"}>{m}</MenuTab>)}
        <TopRight>
          <TopSearch><input aria-label="搜索" defaultValue="楼面梁和过梁重合" /><Icon n="magnify" s={11} /></TopSearch>
          <Svg $s={15} viewBox="0 0 16 16" fill="none"><path d="M8 .5q7.500 0 7.500 7T12 15l-2-3q2-2 2-5t-4-3-4 3 2 5l-2 3Q.5 13 .5 7.500T8 .5z" fill="#c4c6c8" /></Svg>
          <Svg $s={14} viewBox="0 0 16 16"><path d="M8 0q5 1 5 6v4l2 3H1l2-3V6q0-5 5-6zM6 14h4v2H6z" fill="#888" /></Svg>
          <Svg $s={14} viewBox="0 0 16 16"><path d="M8 1q7 0 7 6t-5 6l-2 3-2-3q-5 0-5-6t7-6z" fill="#888" /><path d="M4 7.500h2M7 7.500h2M10 7.500h2" stroke="#fff" strokeWidth="2" /></Svg>
          <strong>?</strong><Caret />
        </TopRight>
      </TopBar>

      <Ribbon>
        {ribbon.map(g => (
          <Group key={g.label} $w={g.w} $pad={g.pad}>
            <Cols $gap={g.gap}>
              {g.big?.map(([n, t, pull, off, arrow]) => <BigTool key={t} $pull={pull} $off={off}><Icon n={n} s={30} />{t}{arrow ? <Caret /> : null}</BigTool>)}
              {g.cols.map((c, i) => <Col key={i}>{c.map(it => <RibbonItem key={it[0]} item={it} />)}</Col>)}
            </Cols>
            <GroupLabel $pad={g.pad}>{g.label}{g.plain ? null : <Caret $s={4} />}</GroupLabel>
          </Group>
        ))}
      </Ribbon>

      <Filters>
        {[["楼层", "2层"], ["类别", "梁"], ["类型", "梁"], ["构件", "KL11(1)"], ["分层", "分层1"]].map(([l, v]) => (
          <Picker key={l}><select aria-label={l}><option>{v}</option></select><Caret /></Picker>
        ))}
      </Filters>

      <Main>
        <Side>
          <SideHead><button aria-label="列表"><Icon n="listView" s={13} /></button><button aria-label="卡片"><Icon n="cardView" s={15} /></button></SideHead>
          <SideBody>
            <SideList>
              {types.map(([t, n], i) => n
                ? <SideItem key={i} $on={t === "梁(L)"}><Icon n={n} />{t}</SideItem>
                : <SideTitle key={i}>{t}</SideTitle>)}
            </SideList>
            <Thumb $h={720} $m="11px 5px 0 0" />
          </SideBody>
        </Side>

        <Stack>
          <Dock>
            <Strip><Close /></Strip>
            <Tabs><Tab $on>构件列表</Tab><Tab>图纸管理</Tab></Tabs>
            <ListTools>
              <ListTool><Icon n="newDoc" />新建<Caret /></ListTool>
              <ListTool><Icon n="delDoc" s={14} />删除</ListTool>
              <ListTool><Icon n="copyDoc" s={14} />复制</ListTool>
              <ListTool><Icon n="layers" />层间复制</ListTool>
              <ListTool><Icon n="archive" />存档</ListTool>
              <More aria-label="更多"><Icon n="more" s={8} /></More>
            </ListTools>
            <ListSearch><input aria-label="搜索构件" placeholder="搜索构件..." /><Icon n="magnify" s={11} /></ListSearch>
            <TreeBody>
              <Tree>
                <Node $x={10}><Twisty />梁</Node>
                <Node $x={30}><Twisty />楼层框架梁</Node>
                {beams.map((b, i) => <Node key={b} $x={60} $p={4} $on={i === 0}>{b}</Node>)}
              </Tree>
              <Thumb $h={91} $m="13px 5px 0 0" />
            </TreeBody>
          </Dock>

          <Dock>
            <Strip><Close /></Strip>
            <Tabs><Tab $on>属性列表</Tab><Tab>图层管理</Tab></Tabs>
            <PropBody>
              <PropSheet>
                <PropTable>
                  <colgroup><col style={{ width: 22 }} /><col style={{ width: 101 }} /><col /></colgroup>
                  <thead><tr><th /><th>属性名称</th><th>属性值</th></tr></thead>
                  <tbody>
                    {props.map(([n, v, k, dim], i) => (
                      <tr key={n}><RowNo $on={i === 5}>{i + 1}</RowNo><PropName $k={k}>{n}</PropName><PropVal $dim={dim} $on={i === 5}>{v}</PropVal></tr>
                    ))}
                  </tbody>
                </PropTable>
              </PropSheet>
              <ScrollCol><Tri $up /><Thumb $h={353} /><Tri /></ScrollCol>
            </PropBody>
          </Dock>
        </Stack>

        <VSplit><i /></VSplit>

        <Centre>
          <View>
            <Scene />
            <Float>
              <h2>钢筋显示控制面板</h2>
              <FloatList>{shows.map(s => <label key={s}><Check $blue defaultChecked />{s}</label>)}</FloatList>
            </Float>
          </View>
          <Splitter $row><i /></Splitter>
          <Editor>
            <Strip><Close /></Strip>
            <EditorTitle>编辑钢筋</EditorTitle>
            <EditorTools>
              <Step>|&lt;</Step><Step>&lt;</Step><Step>&gt;</Step><Step>&gt;|</Step>
              <RowMove aria-label="上移"><Icon n="up" s={14} /></RowMove>
              <RowMove aria-label="下移"><Icon n="down" s={14} /></RowMove>
              <ListTool><Icon n="insert" s={14} />插入</ListTool>
              <ListTool><Icon n="delDoc" />删除</ListTool>
              <ListTool><Icon n="scale" s={14} />缩尺配筋</ListTool>
              <ListTool><Icon n="info" s={14} />钢筋信息</ListTool>
              <ListTool><Icon n="lib" s={14} />钢筋图库</ListTool>
              <ListTool><Icon n="other" s={14} />其他<Caret /></ListTool>
              <span>单构件钢筋总重(kg) : 2131.934</span>
            </EditorTools>
            <Sheet>
              <SheetClip>
                <Bars>
                  <colgroup>{barCols.map(([n, w]) => <col key={n} style={{ width: w }} />)}</colgroup>
                  <thead><tr>{barCols.map(([n]) => (n === "图形" ? <ShapeHead key={n}>{n}</ShapeHead> : <th key={n}>{n}</th>))}</tr></thead>
                  <tbody>
                    {bars.map((b, i) => (
                      <tr key={i}>
                        <th>{i + 1}</th><td>{b[0]}</td><td>{b[1]}</td><td><GradeBox><Icon n="grade" s={11} /></GradeBox></td><td>{b[2]}</td>
                        <ShapeCell><Shape $both={b[5]}><span>{b[3]}</span><Bend $both={b[5]}>{b[4]}</Bend><span>{b[5]}</span></Shape></ShapeCell>
                        {b.slice(6).map((v, j) => <td key={j}>{v}</td>)}
                      </tr>
                    ))}
                  </tbody>
                </Bars>
              </SheetClip>
              <Thumb $h={23} $m="13px 4px 0" />
              <Thumb $w={763} $h={8} $m="4px 0 0 14px" />
              <Corner />
            </Sheet>
          </Editor>
        </Centre>

        <VSplit><i /></VSplit>

        <Settings>
          <Strip />
          <SetTitle>显示设置</SetTitle>
          <SetTabs><SetTab>图元显示</SetTab><SetTab $on>楼层显示</SetTab></SetTabs>
          <Radios>
            {["当前楼层", "相邻楼层", "全部楼层"].map((r, i) => <label key={r}><Radio name="floor" defaultChecked={i === 0} />{r}</label>)}
          </Radios>
          <Floors>
            <FloorRoot><Twisty /><label><FloorCheck disabled />全部楼层</label></FloorRoot>
            {["第4层", "第3层", "第2层", "首层", "第-1层", "基础层"].map(f => <label key={f}><FloorCheck disabled defaultChecked={f === "第2层"} />{f}</label>)}
          </Floors>
          <SetFoot><label><Check />其他区域图元亮显</label></SetFoot>
        </Settings>
      </Main>

      <Status>
        <Readout $w={180}>-38379 Y = 7672 Z = 21350</Readout>
        <Readout $w={76}>层高 : 3.6</Readout>
        <Readout $w={130}>标高 : 4.15~7.75</Readout>
        <Readout $w={100}>1(1)</Readout>
        <Readout $w={77}>隐藏： 0</Readout>
        <StatusBtn $w={25} $on aria-label="正交"><Icon n="ortho" s={14} /></StatusBtn>
        <StatusBtn $w={36} $on aria-label="捕捉"><Icon n="snap" /><Caret /></StatusBtn>
        <StatusBtn $w={25} aria-label="交点"><Icon n="cross" /></StatusBtn>
        <StatusBtn $w={36} aria-label="角度"><Icon n="angle" /><Caret /></StatusBtn>
        <StatusBtn $w={36} aria-label="输入"><Icon n="plus" /><Caret /></StatusBtn>
        <StatusBtn $w={73}>跨图层选择</StatusBtn>
        <StatusBtn $w={61}>折线选择</StatusBtn>
        <span>按鼠标左键指定第一个角点，或拾取构件图元</span>
        <Fps>250 FPS</Fps>
      </Status>
    </Shell>
  );
}
